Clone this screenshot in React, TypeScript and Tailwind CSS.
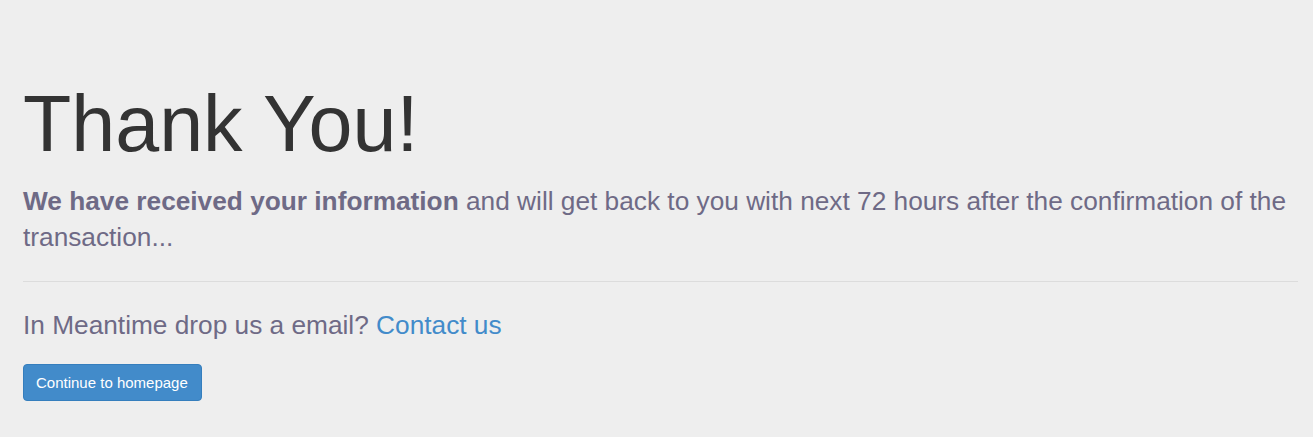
export default function App() {
  return (
    <div className="min-h-screen bg-[#eeeeee] pl-[23px] pr-[15px] pt-[81px]" style={{ fontFamily: '"Liberation Sans", Arial, sans-serif' }}>
      <h1 className="text-[79px] leading-[1.1] font-normal text-[#333333]">Thank You!</h1>
      <p className="mt-[15px] text-[26.25px] leading-[36px] text-[#6e6a86]">
        <strong className="font-bold">We have received your information</strong> and will get back to you with next 72 hours after the confirmation of the transaction...
      </p>
      <hr className="mt-[26px] border-0 border-t border-[#dcdcdc]" />
      <p className="mt-[25px] text-[26.25px] leading-[36px] text-[#6e6a86]">
        In Meantime drop us a email?{" "}
        <a href="#" className="text-[#428bca]">Contact us</a>
      </p>
      <a
        href="#"
        className="mt-[21px] inline-block h-[37px] rounded-[4px] border border-[#357ebd] bg-[#428bca] pl-[12px] pr-[13px] text-[15px] leading-[35px] text-white"
      >
        Continue to homepage
      </a>
    </div>
  );
}
